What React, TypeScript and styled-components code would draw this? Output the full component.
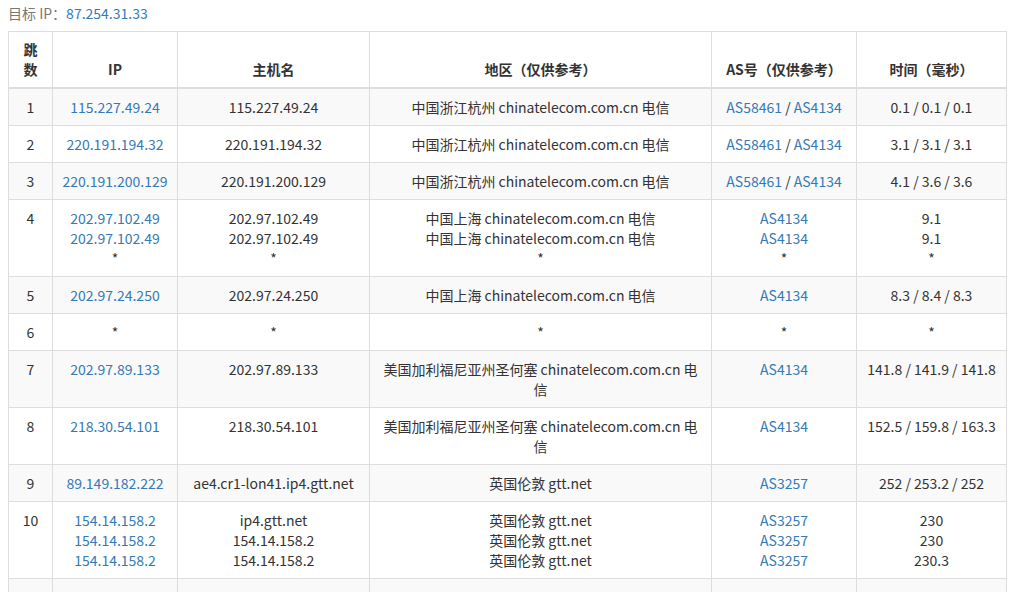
import React from "react";
import styled, { createGlobalStyle } from "styled-components";

const Global = createGlobalStyle`
  * { box-sizing: border-box; }
  body { margin: 0; font-family: "Noto Sans CJK SC", "Noto Sans", sans-serif; font-size: 14px; color: #333; background: #fff; }
`;
const Page = styled.div` padding: 0 5px 0 8px; `;
const Title = styled.div` line-height: 20px; margin: 3px 0 8px; color: #777; `;
const Link = styled.span` color: #337ab7; `;
const Table = styled.table`
  border-collapse: collapse; table-layout: fixed; width: 998px;
  border: 1px solid #ddd;
`;
const Th = styled.th<{ w: number }>`
  width: ${p => p.w}px; padding: 7px 8px 8px; line-height: 20px; font-weight: bold;
  text-align: center; vertical-align: bottom; border: 1px solid #ddd; border-bottom: 2px solid #ddd;
`;
const Tr = styled.tr<{ odd: boolean }>` background: ${p => (p.odd ? "#f9f9f9" : "#fff")}; `;
const Td = styled.td`
  padding: 8px; line-height: 20px; text-align: center; vertical-align: top; border: 1px solid #ddd;
`;

type Row = { n: string; ip: string[]; host: string[]; loc: string[]; as: string[][]; t: string[] };
const rows: Row[] = [
  { n: "1", ip: ["115.227.49.24"], host: ["115.227.49.24"], loc: ["中国浙江杭州 chinatelecom.com.cn 电信"], as: [["AS58461", "AS4134"]], t: ["0.1 / 0.1 / 0.1"] },
  { n: "2", ip: ["220.191.194.32"], host: ["220.191.194.32"], loc: ["中国浙江杭州 chinatelecom.com.cn 电信"], as: [["AS58461", "AS4134"]], t: ["3.1 / 3.1 / 3.1"] },
  { n: "3", ip: ["220.191.200.129"], host: ["220.191.200.129"], loc: ["中国浙江杭州 chinatelecom.com.cn 电信"], as: [["AS58461", "AS4134"]], t: ["4.1 / 3.6 / 3.6"] },
  { n: "4", ip: ["202.97.102.49", "202.97.102.49", "*"], host: ["202.97.102.49", "202.97.102.49", "*"], loc: ["中国上海 chinatelecom.com.cn 电信", "中国上海 chinatelecom.com.cn 电信", "*"], as: [["AS4134"], ["AS4134"], ["*"]], t: ["9.1", "9.1", "*"] },
  { n: "5", ip: ["202.97.24.250"], host: ["202.97.24.250"], loc: ["中国上海 chinatelecom.com.cn 电信"], as: [["AS4134"]], t: ["8.3 / 8.4 / 8.3"] },
  { n: "6", ip: ["*"], host: ["*"], loc: ["*"], as: [["*"]], t: ["*"] },
  { n: "7", ip: ["202.97.89.133"], host: ["202.97.89.133"], loc: ["美国加利福尼亚州圣何塞 chinatelecom.com.cn 电信"], as: [["AS4134"]], t: ["141.8 / 141.9 / 141.8"] },
  { n: "8", ip: ["218.30.54.101"], host: ["218.30.54.101"], loc: ["美国加利福尼亚州圣何塞 chinatelecom.com.cn 电信"], as: [["AS4134"]], t: ["152.5 / 159.8 / 163.3"] },
  { n: "9", ip: ["89.149.182.222"], host: ["ae4.cr1-lon41.ip4.gtt.net"], loc: ["英国伦敦 gtt.net"], as: [["AS3257"]], t: ["252 / 253.2 / 252"] },
  { n: "10", ip: ["154.14.158.2", "154.14.158.2", "154.14.158.2"], host: ["ip4.gtt.net", "154.14.158.2", "154.14.158.2"], loc: ["英国伦敦 gtt.net", "英国伦敦 gtt.net", "英国伦敦 gtt.net"], as: [["AS3257"], ["AS3257"], ["AS3257"]], t: ["230", "230", "230.3"] },
  { n: "", ip: [""], host: [""], loc: [""], as: [[]], t: [""] },
];

const Lines = ({ items, link }: { items: string[]; link?: boolean }) => (
  <>{items.map((s, i) => <div key={i}>{link && s !== "*" ? <Link>{s}</Link> : s || "\u00a0"}</div>)}</>
);

export default function App() {
  return (
    <Page>
      <Global />
      <Title>目标 IP：<Link>87.254.31.33</Link></Title>
      <Table>
        <thead>
          <tr>
            <Th w={44}>跳<br />数</Th><Th w={125}>IP</Th><Th w={192}>主机名</Th>
            <Th w={342}>地区（仅供参考）</Th><Th w={145}>AS号（仅供参考）</Th><Th w={150}>时间（毫秒）</Th>
          </tr>
        </thead>
        <tbody>
          {rows.map((r, i) => (
            <Tr key={i} odd={i % 2 === 0}>
              <Td>{r.n || "\u00a0"}</Td>
              <Td><Lines items={r.ip} link /></Td>
              <Td><Lines items={r.host} /></Td>
              <Td><Lines items={r.loc} /></Td>
              <Td>{r.as.map((a, j) => (
                <div key={j}>{a.length === 0 ? "\u00a0" : a.map((x, k) => (
                  <React.Fragment key={k}>{k > 0 && " / "}{x === "*" ? "*" : <Link>{x}</Link>}</React.Fragment>
                ))}</div>
              ))}</Td>
              <Td><Lines items={r.t} /></Td>
            </Tr>
          ))}
        </tbody>
      </Table>
    </Page>
  );
}
